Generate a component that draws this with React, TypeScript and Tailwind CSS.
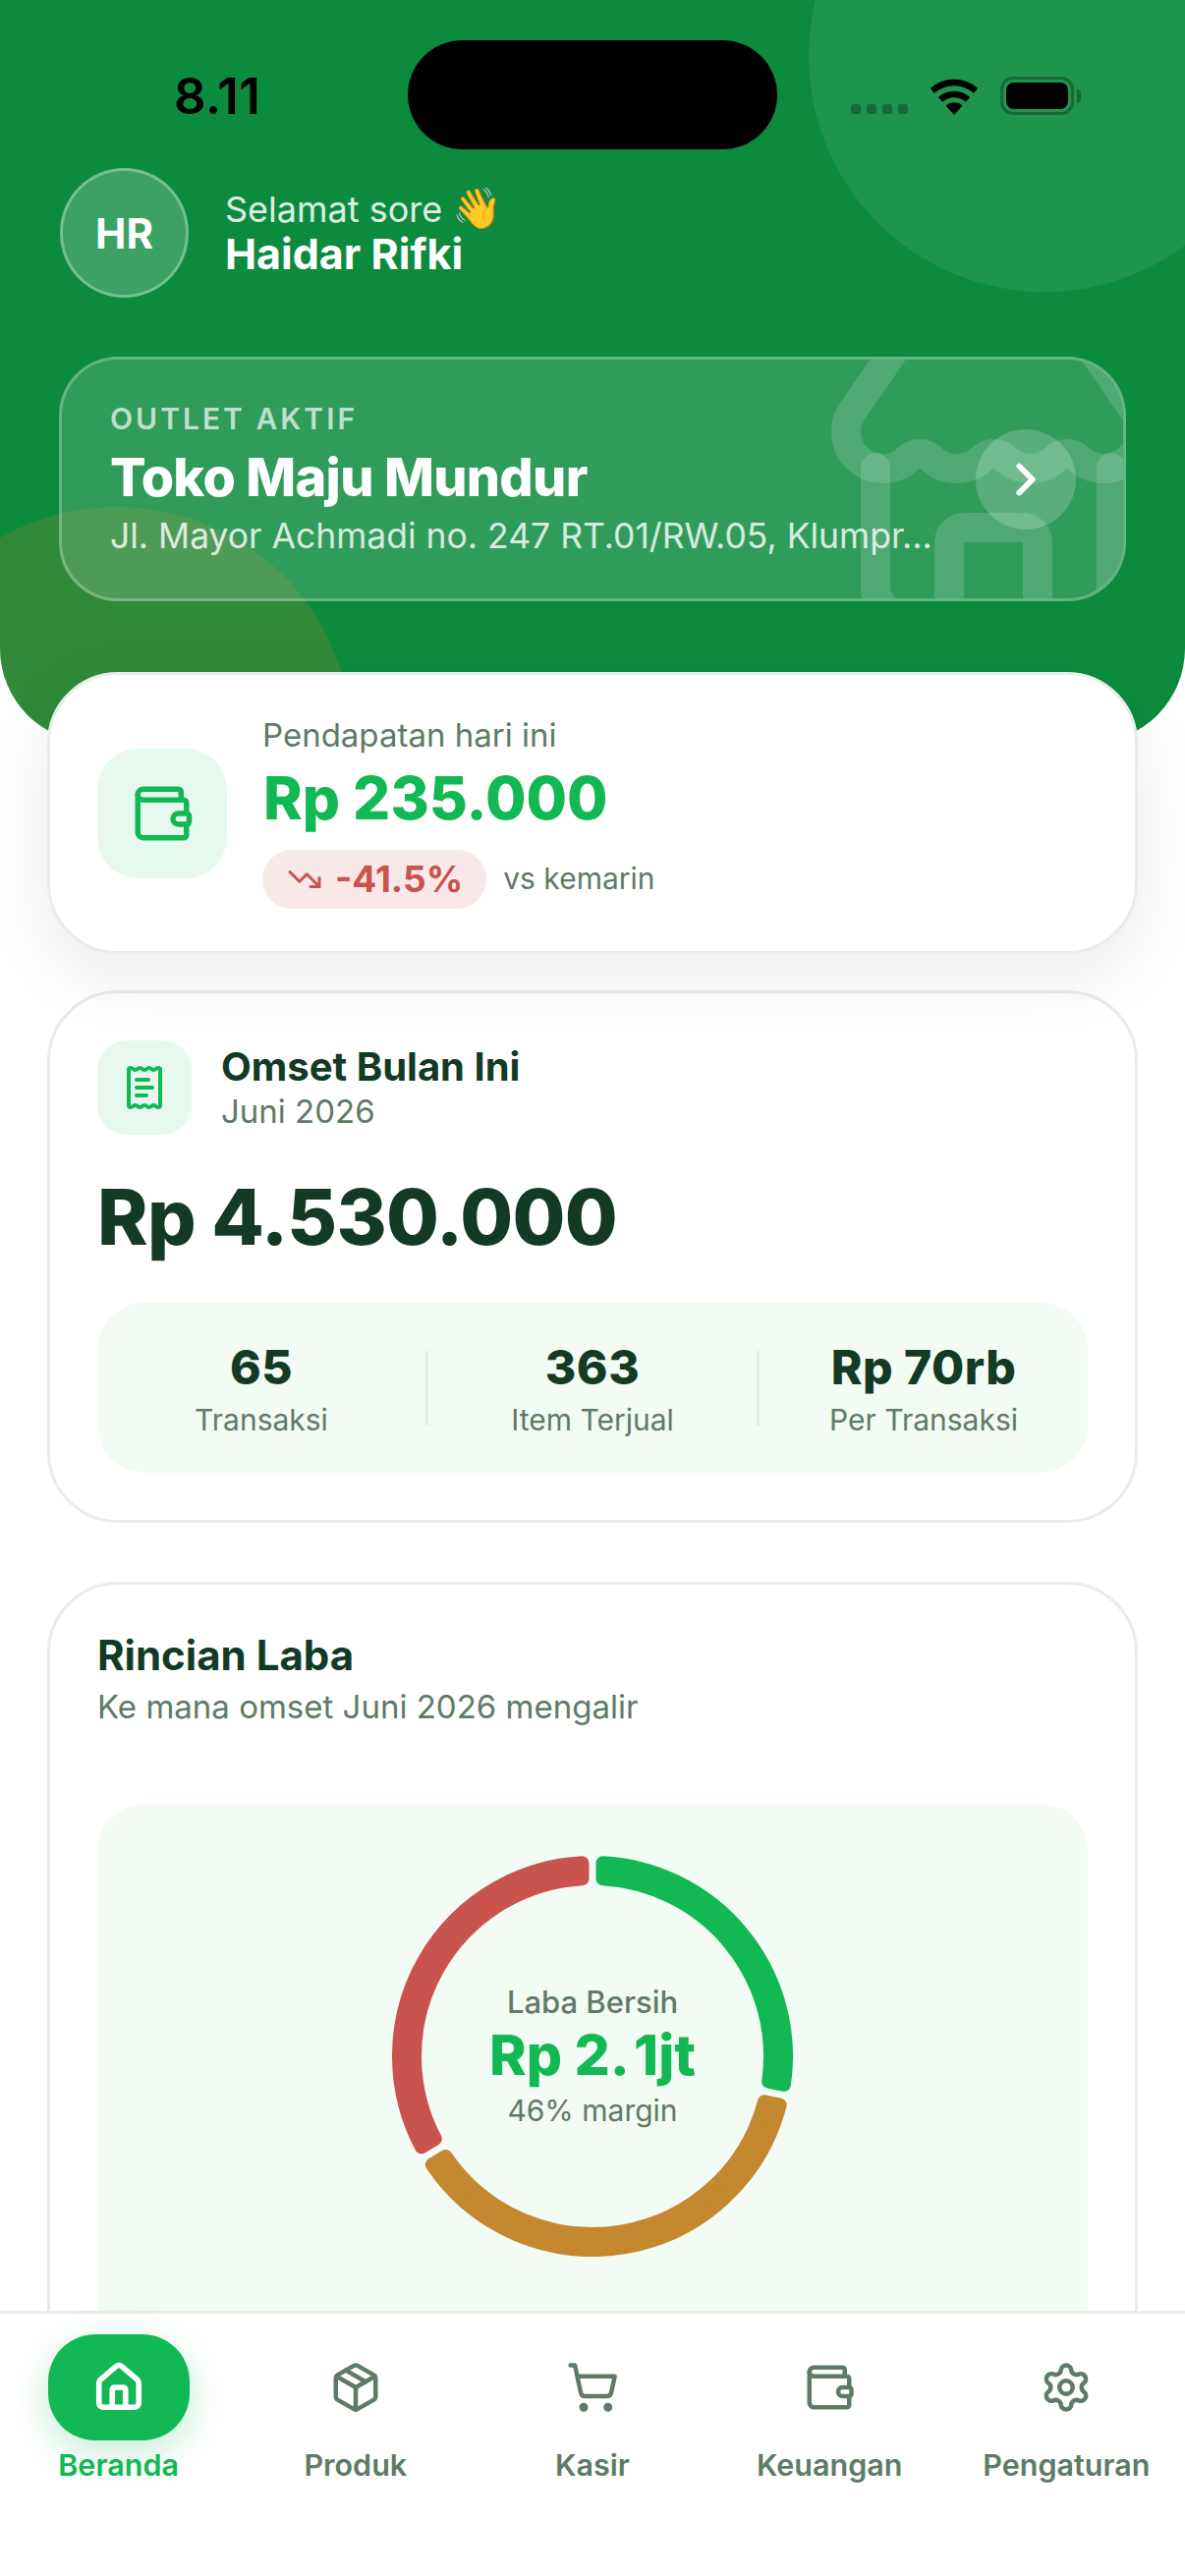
import {
  ChevronRight,
  House,
  Package,
  ReceiptText,
  Settings,
  ShoppingCart,
  Store,
  TrendingDown,
  Wallet,
} from "lucide-react";
import { Fragment } from "react";

const CX = 204;
const CY = 204;
const CORNER = 14;

function polar(deg: number, r: number) {
  const rad = (deg * Math.PI) / 180;
  return `${(CX + r * Math.sin(rad)).toFixed(2)} ${(CY - r * Math.cos(rad)).toFixed(2)}`;
}

// ring piece with a constant pixel gap and slightly rounded corners
function ringPiece(from: number, to: number) {
  const outer = 204 - CORNER / 2;
  const inner = 174 + CORNER / 2;
  const gap = 3.5 + CORNER / 2;
  const off = (r: number) => (Math.asin(gap / r) * 180) / Math.PI;
  const a0 = from + off(outer);
  const a1 = to - off(outer);
  const b0 = from + off(inner);
  const b1 = to - off(inner);
  const large = a1 - a0 > 180 ? 1 : 0;
  return `M${polar(a0, outer)} A${outer} ${outer} 0 ${large} 1 ${polar(a1, outer)} L${polar(b1, inner)} A${inner} ${inner} 0 ${large} 0 ${polar(b0, inner)} Z`;
}

const segments = [
  { from: 0, to: 101.5, color: "#12b853" },
  { from: 101.5, to: 239, color: "#c4892e" },
  { from: 239, to: 360, color: "#c9534d" },
];

const stats = [
  { value: "65", label: "Transaksi" },
  { value: "363", label: "Item Terjual" },
  { value: "Rp 70rb", label: "Per Transaksi" },
];

const navItems = [
  { label: "Beranda", icon: House, active: true },
  { label: "Produk", icon: Package },
  { label: "Kasir", icon: ShoppingCart },
  { label: "Keuangan", icon: Wallet },
  { label: "Pengaturan", icon: Settings },
];

function StatusBar() {
  return (
    <div className="relative flex h-[171px] items-start justify-between">
      <span className="mt-[71px] ml-[177px] text-[51px] leading-[54px] font-semibold tracking-[0.5px] text-black">
        8.11
      </span>
      <div className="absolute top-[41px] left-[415px] h-[111px] w-[376px] rounded-full bg-black" />
      <div className="mt-[78px] mr-[106px] flex items-end">
        <div className="mb-[1px] flex gap-[6px]">
          {[0, 1, 2, 3].map((i) => (
            <div key={i} className="h-[10px] w-[10px] rounded-[3px] bg-[#16693a]" />
          ))}
        </div>
        <svg viewBox="0 0 50 38" className="ml-[22px] h-[38px] w-[50px]">
          <path d="M2.9 13.5A33 33 0 0 1 47.1 13.5" fill="none" stroke="#000" strokeWidth="6.5" />
          <path d="M11 22.4A21 21 0 0 1 39 22.4" fill="none" stroke="#000" strokeWidth="6.5" />
          <path d="M25 38L16.5 28.5A12.7 12.7 0 0 1 33.5 28.5Z" fill="#000" />
        </svg>
        <div className="ml-[22px] flex h-[39px] w-[75px] items-center justify-center rounded-[13px] border-[3px] border-[#16693a]">
          <div className="h-[27px] w-[63px] rounded-[8px] bg-black" />
        </div>
        <div className="mb-[12px] ml-[3px] h-[14px] w-[4px] rounded-r-full bg-[#16693a]" />
      </div>
    </div>
  );
}

function OutletCard() {
  return (
    <div className="relative mx-[60px] mt-[60px] flex h-[249px] items-center gap-[36px] overflow-hidden rounded-[60px] border-[3px] border-white/25 bg-white/15 pr-[48px] pl-[49px]">
      <Store
        size={360}
        strokeWidth={2}
        className="absolute top-[-54px] right-[-48px] text-white/15"
      />
      <div className="relative min-w-0 flex-1">
        <p className="text-[30px] leading-[42px] font-semibold tracking-[3px] text-white/70">
          OUTLET AKTIF
        </p>
        <p className="mt-[6px] text-[54px] leading-[66px] font-extrabold tracking-[-0.7px] text-white">
          Toko Maju Mundur
        </p>
        <p className="mt-[3px] text-[35.5px] leading-[48px] whitespace-nowrap text-white/80">
          Jl. Mayor Achmadi no. 247 RT.01/RW.05, Klumpr...
        </p>
      </div>
      <div className="relative flex h-[102px] w-[102px] shrink-0 items-center justify-center rounded-full bg-white/20">
        <ChevronRight size={54} strokeWidth={2.5} className="text-white" />
      </div>
    </div>
  );
}

function Header() {
  return (
    <header className="relative h-[756px] overflow-hidden rounded-b-[96px] bg-[#0c8b3e]">
      <div className="absolute top-[-183px] left-[823px] h-[480px] w-[480px] rounded-full bg-white/8" />
      <div className="absolute top-[516px] left-[-121px] h-[480px] w-[480px] rounded-full bg-[#c4892e]/20" />
      <div className="relative">
        <StatusBar />
        <div className="flex items-center gap-[37px] pl-[61px]">
          <div className="flex h-[132px] w-[131px] items-center justify-center rounded-full border-[3px] border-white/30 bg-white/20 text-[42px] font-bold text-white">
            HR
          </div>
          <div className="pb-[6px]">
            <p className="h-[48px] text-[36px] leading-[48px] text-white/85">
              Selamat sore <span className="text-[41px] leading-[48px] text-white">👋</span>
            </p>
            <p className="text-[43px] leading-[46px] font-bold text-white">Haidar Rifki</p>
          </div>
        </div>
        <OutletCard />
      </div>
    </header>
  );
}

function IncomeCard() {
  return (
    <section className="relative flex h-[287px] items-center gap-[36px] rounded-[72px] border-[3px] border-[#e5efe8] bg-white pl-[48px] shadow-[0_24px_72px_rgba(0,0,0,0.08)]">
      <div className="flex h-[132px] w-[132px] items-center justify-center rounded-[42px] bg-[#e7f8ee]">
        <Wallet size={66} strokeWidth={2} className="text-[#12b853]" />
      </div>
      <div className="pb-[4px]">
        <p className="text-[33px] leading-[42px] text-[#5f7a66]">Pendapatan hari ini</p>
        <p className="mt-[7px] pl-[1px] text-[60px] leading-[72px] font-extrabold text-[#12b853]">
          Rp 235.000
        </p>
        <div className="mt-[17px] flex items-center gap-[17px]">
          <div className="flex h-[60px] items-center gap-[13px] rounded-full bg-[#f8e9e8] pr-[24px] pl-[25px] text-[37px] font-bold text-[#c9534d]">
            <TrendingDown size={36} strokeWidth={2} />
            -41.5%
          </div>
          <span className="text-[30px] text-[#5f7a66]">vs kemarin</span>
        </div>
      </div>
    </section>
  );
}

function RevenueCard() {
  return (
    <section className="mt-[37px] h-[542px] rounded-[72px] border-[3px] border-[#e5efe8] bg-white px-[48px] pt-[48px]">
      <div className="flex items-center gap-[30px]">
        <div className="flex h-[96px] w-[96px] items-center justify-center rounded-[30px] bg-[#e7f8ee]">
          <ReceiptText size={48} strokeWidth={2} className="text-[#12b853]" />
        </div>
        <div>
          <p className="text-[40px] leading-[48px] font-bold text-[#133a24]">Omset Bulan Ini</p>
          <p className="text-[33px] leading-[42px] text-[#5f7a66]">Juni 2026</p>
        </div>
      </div>
      <p className="mt-[36px] text-[78px] leading-[96px] font-extrabold tracking-[-0.7px] text-[#133a24]">
        Rp 4.530.000
      </p>
      <div className="mt-[39px] flex h-[173px] items-center rounded-[48px] bg-[#f2fbf4]">
        {stats.map((s, i) => (
          <Fragment key={s.label}>
            {i > 0 && <div className="h-[76px] w-[3px] bg-[#e5efe8]" />}
            <div className="flex flex-1 flex-col items-center pt-[6px]">
              <p className="text-[48px] leading-[54px] font-extrabold tracking-[0.5px] text-[#133a24]">
                {s.value}
              </p>
              <p className="mt-[5px] text-[30px] leading-[42px] text-[#5f7a66]">{s.label}</p>
            </div>
          </Fragment>
        ))}
      </div>
    </section>
  );
}

function ProfitCard() {
  return (
    <section className="mt-[60px] rounded-[72px] border-[3px] border-[#e5efe8] bg-white px-[48px] pt-[48px] pb-[48px]">
      <p className="text-[42px] leading-[48px] font-bold text-[#133a24]">Rincian Laba</p>
      <p className="mt-[7px] text-[33px] leading-[42px] text-[#5f7a66]">
        Ke mana omset Juni 2026 mengalir
      </p>
      <div className="mt-[78px] flex h-[700px] justify-center rounded-[48px] bg-[#f2fbf4] pt-[53px]">
        <div className="relative h-[408px] w-[408px]">
          <svg viewBox="0 0 408 408" className="h-[408px] w-[408px]">
            {segments.map((s) => (
              <path
                key={s.color}
                d={ringPiece(s.from, s.to)}
                fill={s.color}
                stroke={s.color}
                strokeWidth={CORNER}
                strokeLinejoin="round"
              />
            ))}
          </svg>
          <div className="absolute inset-0 flex flex-col items-center justify-center">
            <p className="text-[31px] leading-[42px] font-medium text-[#5f7a66]">Laba Bersih</p>
            <p className="mt-[3px] text-[57px] leading-[60px] font-extrabold text-[#12b853]">
              Rp 2.<span className="ml-[4px]">1jt</span>
            </p>
            <p className="mt-[5px] text-[30px] leading-[42px] text-[#5f7a66]">46% margin</p>
          </div>
        </div>
      </div>
    </section>
  );
}

function BottomNav() {
  return (
    <nav className="absolute right-0 bottom-0 left-0 flex h-[270px] border-t-[3px] border-[#e5efe8] bg-white pt-[21px]">
      {navItems.map((item) => {
        const Icon = item.icon;
        return (
          <div key={item.label} className="flex flex-1 flex-col items-center">
            <div
              className={`flex h-[108px] w-[144px] items-center justify-center rounded-[48px] ${
                item.active
                  ? "bg-[#12b853] text-white shadow-[0_12px_36px_rgba(18,184,83,0.25)]"
                  : "text-[#5f7a66]"
              }`}
            >
              <Icon size={54} strokeWidth={item.active ? 2.5 : 2} />
            </div>
            <span
              className={`mt-[4px] text-[30.5px] leading-[42px] font-semibold ${
                item.active ? "text-[#12b853]" : "text-[#5f7a66]"
              }`}
            >
              {item.label}
            </span>
          </div>
        );
      })}
    </nav>
  );
}

export default function App() {
  return (
    <div className="relative h-[2622px] w-[1206px] overflow-hidden bg-white [font-family:Inter,sans-serif]">
      <Header />
      <main className="relative mt-[-72px] px-[48px]">
        <IncomeCard />
        <RevenueCard />
        <ProfitCard />
      </main>
      <BottomNav />
    </div>
  );
}
